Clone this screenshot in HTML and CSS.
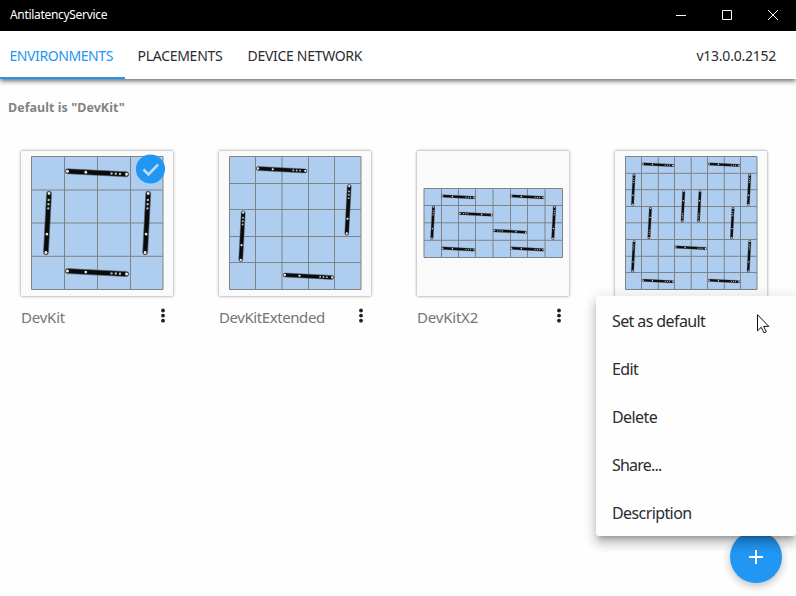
FILE: index.html
```html
<!DOCTYPE html>
<html lang="en">
<head>
<meta charset="utf-8">
<title>AntilatencyService</title>
<link rel="stylesheet" href="styles.css">
</head>
<body>
<svg class="defs" aria-hidden="true">
  <defs>
    <g id="bar">
      <rect x="-31.800" y="-2.500" width="63.600" height="5" rx="2.400" fill="#0a0a0a" stroke="#59636e" stroke-width=".6"/>
      <g fill="#e8e8e8">
        <circle cx="-29.600" r="1.500"/><circle cx="-11.200" r="1.400"/>
        <circle cx="14.600" r="1.200" fill="#bbb"/><circle cx="18.800" r="1.200" fill="#bbb"/><circle cx="23" r="1.200" fill="#bbb"/><circle cx="29.600" r="1.500"/>
      </g>
    </g>
    <g id="dots" fill="#202124"><circle cx="3" cy="2.500" r="1.900"/><circle cx="3" cy="7.600" r="1.900"/><circle cx="3" cy="12.700" r="1.900"/></g>
  </defs>
</svg>
<div class="window">
  <header class="titlebar">
    <span class="app-name">AntilatencyService</span>
    <div class="controls">
      <svg viewBox="0 0 46 31"><path d="M18 15.500h10"/></svg>
      <svg viewBox="0 0 46 31"><path d="M18.500 10.500h9v9h-9z"/></svg>
      <svg viewBox="0 0 46 31"><path d="M18 10l10 10M28 10L18 20"/></svg>
    </div>
  </header>
  <nav class="tabs">
    <a class="tab active"><span class="t-env">ENVIRONMENTS</span></a>
    <a class="tab"><span class="t-place">PLACEMENTS</span></a>
    <a class="tab"><span class="t-net">DEVICE NETWORK</span></a>
    <span class="version">v13.0.0.2152</span>
  </nav>
  <main>
    <p class="default-note">Default is "DevKit"</p>
    <div class="grid">
      <article class="item">
        <div class="card">
          <svg viewBox="0 0 152 145">
            <path class="board" d="M10.500 5.500h131.500v133H10.500z"/>
            <path class="lines" d="M43.500 5.500v133M76.500 5.500v133M109.500 5.500v133M10.500 39h131.500M10.500 72h131.500M10.500 105.300h131.500"/>
            <use href="#bar" transform="translate(76 21.800) rotate(2.900)"/>
            <use href="#bar" transform="translate(76 121.600) rotate(2.900)"/>
            <use href="#bar" transform="translate(26.500 72) rotate(-87)"/>
            <use href="#bar" transform="translate(125.700 72) rotate(-87)"/>
          </svg>
          <svg class="badge" viewBox="0 0 30 30"><circle cx="15.500" cy="15" r="14.600" fill="#2196f3"/><path d="M8.500 15.500l5 5L23 10.700" fill="none" stroke="#bbdefb" stroke-width="2.600"/></svg>
        </div>
        <div class="caption"><span class="n1">DevKit</span><svg viewBox="0 0 6 16"><use href="#dots"/></svg></div>
      </article>
      <article class="item">
        <div class="card">
          <svg viewBox="0 0 152 145">
            <path class="board" d="M10.500 5.500h131.500v133H10.500z"/>
            <path class="lines" d="M36.500 5.500v133M63 5.500v133M89.500 5.500v133M115.500 5.500v133M10.500 32.500h131.500M10.500 58.500h131.500M10.500 85.500h131.500M10.500 111.500h131.500"/>
            <use href="#bar" transform="translate(62.700 18.700) rotate(2.900) scale(.8)"/>
            <use href="#bar" transform="translate(129 58.800) rotate(-87) scale(.8)"/>
            <use href="#bar" transform="translate(23 85.200) rotate(-87) scale(.8)"/>
            <use href="#bar" transform="translate(89.500 125.200) rotate(2.900) scale(.8)"/>
          </svg>
        </div>
        <div class="caption"><span class="n2">DevKitExtended</span><svg viewBox="0 0 6 16"><use href="#dots"/></svg></div>
      </article>
      <article class="item">
        <div class="card">
          <svg viewBox="0 0 152 145">
            <path class="board" d="M7 37.500h138.500v69H7z"/>
            <path class="lines" d="M24.500 37.500v69M41.500 37.500v69M58.500 37.500v69M76 37.500v69M93.500 37.500v69M110.500 37.500v69M128 37.500v69M7 54.500h138.500M7 71.800h138.500M7 89.300h138.500"/>
            <use href="#bar" transform="translate(41.300 45.800) rotate(3) scale(.53)"/>
            <use href="#bar" transform="translate(110.300 45.800) rotate(3) scale(.53)"/>
            <use href="#bar" transform="translate(58.700 63.200) rotate(183) scale(.53)"/>
            <use href="#bar" transform="translate(93 80.400) rotate(183) scale(.53)"/>
            <use href="#bar" transform="translate(41.300 98) rotate(3) scale(.53)"/>
            <use href="#bar" transform="translate(110.300 98) rotate(3) scale(.53)"/>
            <use href="#bar" transform="translate(15.700 71.700) rotate(-87) scale(.53)"/>
            <use href="#bar" transform="translate(136.700 71.700) rotate(-87) scale(.53)"/>
          </svg>
        </div>
        <div class="caption"><span class="n3">DevKitX2</span><svg viewBox="0 0 6 16"><use href="#dots"/></svg></div>
      </article>
      <article class="item">
        <div class="card">
          <svg viewBox="0 0 152 145">
            <path class="board" d="M10.500 5.500h131.500v133H10.500z"/>
            <path class="lines" d="M26.500 5.500v133M43.300 5.500v133M59.500 5.500v133M76.200 5.500v133M92.500 5.500v133M109.300 5.500v133M125.500 5.500v133M10.500 22.300h131.500M10.500 38.700h131.500M10.500 55.500h131.500M10.500 71.800h131.500M10.500 88.500h131.500M10.500 105.300h131.500M10.500 121.500h131.500"/>
            <use href="#bar" transform="translate(43 13.700) rotate(3) scale(.5)"/>
            <use href="#bar" transform="translate(109 13.700) rotate(3) scale(.5)"/>
            <use href="#bar" transform="translate(75.700 96.700) rotate(3) scale(.5)"/>
            <use href="#bar" transform="translate(43 130) rotate(3) scale(.5)"/>
            <use href="#bar" transform="translate(109 130) rotate(3) scale(.5)"/>
            <use href="#bar" transform="translate(18.300 38.700) rotate(-87) scale(.5)"/>
            <use href="#bar" transform="translate(134 38.700) rotate(-87) scale(.5)"/>
            <use href="#bar" transform="translate(68 55.300) rotate(93) scale(.5)"/>
            <use href="#bar" transform="translate(84.300 55.300) rotate(93) scale(.5)"/>
            <use href="#bar" transform="translate(34.700 72) rotate(93) scale(.5)"/>
            <use href="#bar" transform="translate(117.300 72) rotate(-87) scale(.5)"/>
            <use href="#bar" transform="translate(18.300 105.300) rotate(-87) scale(.5)"/>
            <use href="#bar" transform="translate(134 105.300) rotate(-87) scale(.5)"/>
          </svg>
        </div>
      </article>
    </div>
  </main>
  <button class="fab" aria-label="Add"><svg viewBox="0 0 14 14"><path d="M7 0v14M0 7h14" stroke="#fff" stroke-width="2"/></svg></button>
  <ul class="menu">
    <li class="m1">Set as default</li>
    <li class="m2">Edit</li>
    <li class="m3">Delete</li>
    <li class="m4">Share...</li>
    <li class="m5">Description</li>
  </ul>
  <svg class="cursor" viewBox="0 0 13 20"><path d="M.5.7v16.100l3.700-3.500 2.800 5.600 2.300-1.100-2.600-5.400h5.100z" fill="#fff" stroke="#111" stroke-width="1"/></svg>
</div>
</body>
</html>
```
FILE: styles.css
```css
* { box-sizing: border-box; }
body { margin: 0; font-family: "Noto Sans", "Open Sans", sans-serif; color: #2b2c30; }
svg { display: block; }
.defs { position: absolute; width: 0; height: 0; }
.window { position: relative; width: 796px; height: 596px; overflow: hidden; background: #fefefe; }

.titlebar { display: flex; justify-content: space-between; height: 31px; background: #000; color: #fff; }
.app-name { padding-left: 10px; font-size: 12px; line-height: 30px; letter-spacing: -.31px; }
.controls { display: flex; }
.controls svg { width: 46px; height: 31px; fill: none; stroke: #fff; stroke-width: 1; }

.tabs { display: flex; height: 48px; background: #fff; box-shadow: 0 2px 5px rgba(0,0,0,.6); font-size: 14px; line-height: 50px; }
.tab { padding: 0 10px; white-space: nowrap; }
.active { width: 125px; padding-left: 9.500px; color: #2196f3; border-bottom: 2px solid #2196f3; }
.tab:nth-child(2) { width: 113px; padding-left: 12.500px; }
.tab:nth-child(3) { width: 140px; padding-left: 9.500px; }
.t-env { letter-spacing: -.42px; }
.t-place { letter-spacing: -.28px; }
.t-net { letter-spacing: -.3px; }
.version { margin-left: auto; padding-right: 20px; letter-spacing: -.24px; }

.default-note { margin: 0; padding: 19px 8px 0; height: 72px; font-size: 12.500px; line-height: 20px; font-weight: 700; letter-spacing: .04px; color: #838383; }
.grid { display: flex; gap: 46px; padding-left: 21px; }
.item { flex: 0 0 152px; }
.card { position: relative; height: 145px; background: #fafafa; border-radius: 1px; box-shadow: 0 0 3px rgba(0,0,0,.5); }
.card > svg:first-child { width: 152px; height: 145px; }
.board { fill: #aecdef; stroke: #7f8286; }
.lines { fill: none; stroke: #7f8286; }
.badge { position: absolute; left: 114px; top: 3px; width: 30px; height: 30px; }
.caption { display: flex; justify-content: space-between; padding: 9px 7px 0 0; font-size: 15px; line-height: 24px; color: #757575; }
.caption svg { width: 6px; height: 16px; margin-top: 3px; }
.n1 { letter-spacing: -.22px; }
.n2 { letter-spacing: -.42px; }
.n3 { letter-spacing: -.2px; }

.fab { position: absolute; left: 730px; top: 531px; display: grid; place-items: center; width: 52px; height: 52px; padding: 0; border: 0; border-radius: 50%; background: #2196f3; box-shadow: 0 3px 8px rgba(0,0,0,.25); }
.fab svg { width: 14px; height: 14px; }
.menu { position: absolute; left: 596px; top: 296px; width: 200px; height: 240px; margin: 0; padding: 0; list-style: none; background: #fefefe; border-radius: 3px; box-shadow: 0 5px 5px -3px rgba(0,0,0,.25), 0 8px 10px 1px rgba(0,0,0,.14), 0 3px 14px 2px rgba(0,0,0,.12); }
.menu li { height: 48px; padding-left: 16px; font-size: 16px; line-height: 51px; letter-spacing: -.6px; }
.menu .m4 { letter-spacing: -.8px; }
.cursor { position: absolute; left: 757px; top: 314px; width: 13px; height: 20px; }
```
